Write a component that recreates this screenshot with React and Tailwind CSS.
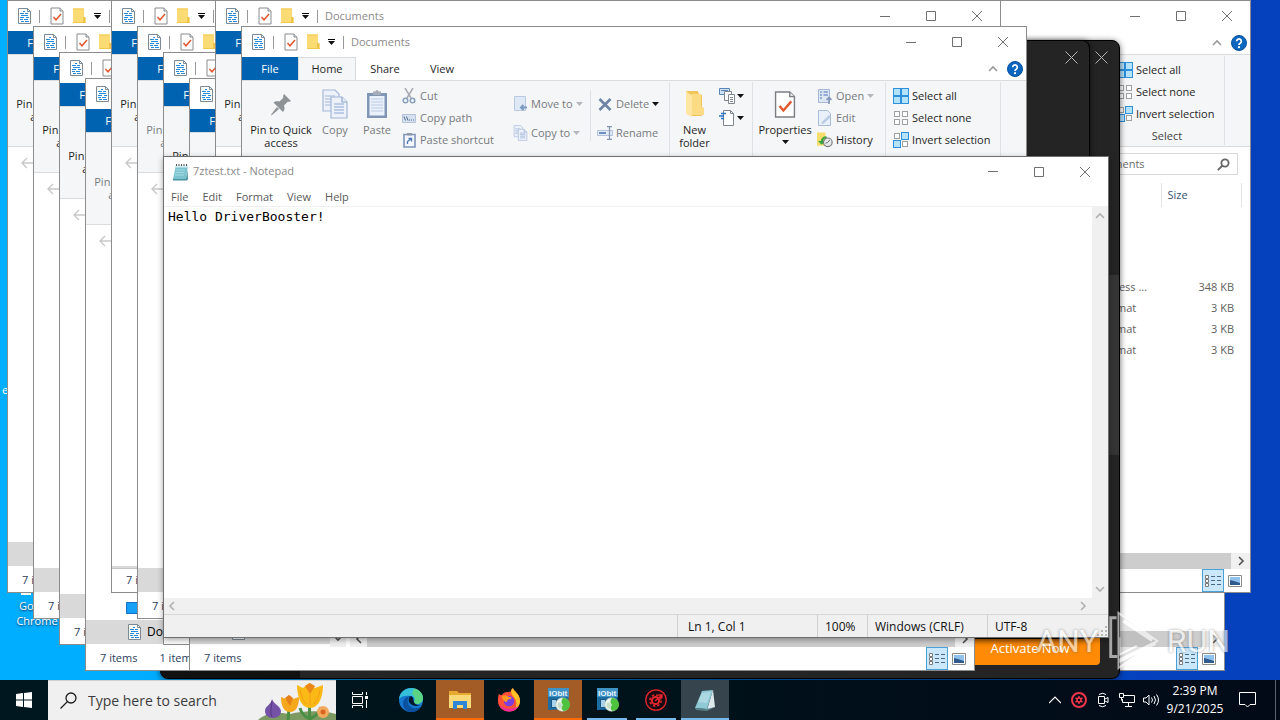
import React from 'react';

const ui = "font-['Open_Sans','Noto_Sans',sans-serif]";

/* ---------- small drawings ---------- */

function DocIcon() {
  return (
    <svg width="13" height="16" viewBox="0 0 13 16" fill="none" className="shrink-0">
      <path d="M.5.5h9l3 3v12H.5z" fill="#fff" stroke="#7d8a96" />
      <path d="M9.500.5v3h3" stroke="#7d8a96" />
      <path d="M5 3.500h2M2 5.500h4M7 5.500h3M3 7.500h7M2 9.500h4M8 9.500h3M2 11.500h3M6 11.500h4M3 13.500h3M7 13.500h4" stroke="#2589dc" />
    </svg>
  );
}

function CheckDocIcon({ size = 14 }) {
  return (
    <svg width={size} height={Math.round(size * 1.3)} viewBox="0 0 14 18" fill="none" className="shrink-0">
      <path d="M1 1h9l3 3v13H1z" fill="#fff" stroke="#7b7f84" strokeWidth=".9" />
      <path d="M10 1v3h3" fill="#e8ebee" stroke="#7b7f84" strokeWidth=".9" />
      <path d="m3.500 10 2.500 2.800L11 7" stroke="#e2582c" strokeWidth="1.500" />
    </svg>
  );
}

function SmallFolderIcon() {
  return (
    <svg width="14" height="16" viewBox="0 0 14 16" className="shrink-0">
      <path d="M1 .5h11v9l1.500 1v4.500H1z" fill="#fbdc74" />
      <path d="M1 .5h11v1H1zM1 14h12.500v1H1z" fill="#f0c850" />
      <path d="M11 9h2.500v6H11z" fill="#eec34a" />
    </svg>
  );
}

function FolderIcon() {
  return (
    <svg width="20" height="28" viewBox="0 0 20 28" className="shrink-0">
      <path d="M1 1h12l1 3 3 1v21H5z" fill="#f0c55c" />
      <path d="M6 4h10v12l3 2v7H6z" fill="#fbdb83" />
      <path d="M1 1l6 5v21l-6-3z" fill="#ffe7a3" />
    </svg>
  );
}

function Caret({ light }) {
  return (
    <svg width="7" height="4" viewBox="0 0 7 4" className="shrink-0">
      <path d="M0 0h7L3.500 4z" fill={light ? '#b4b8bd' : '#111'} />
    </svg>
  );
}

function Chevron({ dir, color = '#9a9a9a', size = 10 }) {
  const d = {
    up: 'M1 7l4-4 4 4',
    down: 'M1 3l4 4 4-4',
    left: 'M7 1L3 5l4 4',
    right: 'M3 1l4 4-4 4',
  }[dir];
  return (
    <svg width={size} height={size} viewBox="0 0 10 10" fill="none" stroke={color} strokeWidth="1.600" className="shrink-0">
      <path d={d} />
    </svg>
  );
}

function ArrowIcon({ flip }) {
  return (
    <svg width="14" height="12" viewBox="0 0 14 12" fill="none" stroke="#c9c9c9" strokeWidth="1.400">
      <path d={flip ? 'M0 6h13M8 1l5 5-5 5' : 'M14 6H1M6 1L1 6l5 5'} />
    </svg>
  );
}

function PinIcon() {
  return (
    <svg width="24" height="28" viewBox="0 0 24 28" fill="#8e9398">
      <path d="M15 4l7 7-2 1-1-.5-4 4c1 3 .5 5-1 6.500L4.500 12.500c1.500-1.500 4-1.500 6-1l4-4-.5-1.500z" />
      <path d="M8 17l2 2-7 6-1 .5L2.500 24z" />
    </svg>
  );
}

function CopyIcon({ small }) {
  return (
    <svg width={small ? 15 : 26} height={small ? 16 : 30} viewBox="0 0 26 30" fill="#edf2fa" stroke="#a5b6d8" strokeWidth="1.200">
      <path d="M1 1h12l4 4v17H1z" />
      <path d="M3 7h10M3 10h10M3 13h10M3 16h10" />
      <path d="M9 8h11l5 5v16H9z" />
      <path d="M20 8v5h5M12 15h10M12 18h10M12 21h10M12 24h10" stroke="#8ea6d2" />
    </svg>
  );
}

function PasteIcon() {
  return (
    <svg width="22" height="30" viewBox="0 0 22 30" fill="none">
      <path d="M1 4h20v25H1z" fill="#8195b5" />
      <path d="M3.500 7h15v19.500h-15z" fill="#eaf1fb" />
      <path d="M7 2.500h2.500a1.500 1.500 0 0 1 3 0H15V6H7z" fill="#a6adb8" />
      <path d="M5 10h12M5 13h12M5 16h12M5 19h12M5 22h12" stroke="#bccbe4" />
    </svg>
  );
}

function CutIcon() {
  return (
    <svg width="14" height="16" viewBox="0 0 14 16" fill="none" stroke="#8aa0bf" strokeWidth="1.500">
      <path d="M3 0l6 10M11 0L5 10" stroke="#a6abb2" />
      <circle cx="3.500" cy="12.500" r="2.300" />
      <circle cx="10.500" cy="12.500" r="2.300" />
    </svg>
  );
}

function PathIcon() {
  return (
    <svg width="14" height="9" viewBox="0 0 14 9" fill="none">
      <path d="M.5.5h13v8H.5z" fill="#d6e1f0" stroke="#b3c3dc" />
      <path d="M2 2.500l1.500 4M4.500 2.500l1.500 4" stroke="#566d8f" />
      <path d="M7 6h6" stroke="#566d8f" strokeDasharray="1 1" />
    </svg>
  );
}

function ShortcutIcon() {
  return (
    <svg width="13" height="16" viewBox="0 0 13 16" fill="none">
      <path d="M1 2.500h11v12.500H1z" fill="#f2f6fc" stroke="#7f95b9" strokeWidth="1.600" />
      <path d="M4 1h5v2.500H4z" fill="#8d99ab" />
      <path d="M4.500 12V9.500L8 7M5.500 6.500h3v3" stroke="#4e77b5" strokeWidth="1.300" />
    </svg>
  );
}

function MoveIcon() {
  return (
    <svg width="13" height="16" viewBox="0 0 13 16" fill="none">
      <path d="M.5.5h11v14H.5z" fill="#dfe8f5" stroke="#b9c9e2" />
      <path d="M13 11.500H7M9.500 9L7 11.500l2.500 2.500" stroke="#7f9ac2" strokeWidth="2" />
    </svg>
  );
}

function DeleteIcon() {
  return (
    <svg width="14" height="13" viewBox="0 0 14 13" stroke="#6d84a5" strokeWidth="2.600" fill="none">
      <path d="M1.500 1l11 11M12.500 1l-11 11" />
    </svg>
  );
}

function RenameIcon() {
  return (
    <svg width="16" height="14" viewBox="0 0 16 14" fill="none">
      <path d="M.5 4.500h15v5H.5z" fill="#e3ebf7" stroke="#b3c3dc" />
      <path d="M2 7h7" stroke="#6f8fc0" strokeWidth="2" />
      <path d="M10 .7h5M12.500.7v12.600M10 13.300h5" stroke="#8395ae" strokeWidth="1.200" />
    </svg>
  );
}

function NewItemIcon() {
  return (
    <svg width="17" height="16" viewBox="0 0 17 16" fill="#fff" stroke="#7d858e">
      <path d="M.5.5h10v6H.5z" fill="#cfe2f5" stroke="#5a85b5" />
      <path d="M2 2.500h7" stroke="#5a85b5" />
      <path d="M5.500 3.500h7v9h-7z" />
      <path d="M9.500 6.500h6v9h-6z" />
      <path d="M11 9.500h3M11 11.500h3M11 13.500h3" />
    </svg>
  );
}

function EasyAccessIcon() {
  return (
    <svg width="17" height="16" viewBox="0 0 17 16" fill="none">
      <path d="M4.500.5h7l3 3v12h-10z" fill="#fff" stroke="#7d858e" />
      <path d="M11.500.5v3h3" stroke="#7d858e" />
      <path d="M2 3.500h5M0 6h5M2 8.500h3" stroke="#2576c8" strokeWidth="1.500" />
    </svg>
  );
}

function OpenIcon() {
  return (
    <svg width="14" height="15" viewBox="0 0 14 15" fill="none">
      <path d="M.5.5h11v13H.5z" fill="#dde7f5" stroke="#a4b7d8" />
      <path d="M2 3h2M2 6h2M2 9h2M5.500 3H10M5.500 6H10" stroke="#7f9ac9" strokeWidth="1.500" />
      <path d="M11 15V9M8.500 11L11 8.500l2.500 2.500" stroke="#8497b8" strokeWidth="1.600" />
    </svg>
  );
}

function EditIcon() {
  return (
    <svg width="14" height="16" viewBox="0 0 14 16" fill="none">
      <path d="M.5.5h9l3 3v12H.5z" fill="#e9f0fa" stroke="#a9bbda" />
      <path d="M3 13l8-8 2 2-8 7z" fill="#b9cae6" />
    </svg>
  );
}

function HistoryIcon() {
  return (
    <svg width="17" height="16" viewBox="0 0 17 16" fill="none">
      <path d="M0 0h9v14H0z" fill="#f8dc6c" />
      <path d="M10 4a6 6 0 0 0-6 5H1l4 4 4-4H6.500a4 4 0 0 1 4-3z" fill="#35a53c" />
      <circle cx="11.500" cy="10.500" r="4.600" fill="#e6e9ec" stroke="#777" strokeWidth="1.200" />
      <path d="M11.500 10.500l2-2.500M11.500 10.500l-2.500 1" stroke="#666" />
    </svg>
  );
}

function TilesIcon({ mode }) {
  const cells = [
    [0, 0, mode === 'all'],
    [8, 0, mode === 'all' || mode === 'invert'],
    [0, 8, mode === 'all' || mode === 'invert'],
    [8, 8, mode === 'all'],
  ];
  return (
    <svg width="16" height="16" viewBox="0 0 16 16" className="shrink-0">
      {cells.map(([x, y, on]) =>
        on ? (
          <rect key={`${x}${y}`} x={x + 0.5} y={y + 0.5} width="7" height="7" fill="#b5e2fb" stroke="#2e8fdb" />
        ) : (
          <rect key={`${x}${y}`} x={x + 1.5} y={y + 1.5} width="5" height="5" fill="#fff" stroke="#a0a0a0" />
        )
      )}
    </svg>
  );
}

function HelpIcon() {
  return (
    <svg width="16" height="16" viewBox="0 0 16 16" fill="none">
      <circle cx="8" cy="8" r="7.500" fill="#0b66c0" stroke="#07529c" />
      <path d="M5.700 6.200a2.300 2.300 0 1 1 3.500 2C8.300 8.700 8 9 8 10" stroke="#fff" strokeWidth="1.700" />
      <circle cx="8" cy="12.200" r="1.100" fill="#fff" />
    </svg>
  );
}

function NotepadIcon() {
  return (
    <svg width="17" height="18" viewBox="0 0 17 18">
      <path d="M4 2h12l-2 14H1z" fill="#7cc3cf" />
      <path d="M4 2h12l-.4 2.500H3.500z" fill="#d8eef1" />
      <path d="M1 16h13l1.500-9 .5 9-1 1.500H1z" fill="#4b93a3" />
      <path d="M4.500 1v2M7 1v2M9.500 1v2M12 1v2M14.500 1v2" stroke="#555" />
      <path d="M4 7h9M3.500 9.500h9M3 12h9" stroke="#a6dbe3" />
    </svg>
  );
}

function DetailsViewIcon() {
  return (
    <svg width="18" height="14" viewBox="0 0 18 14" fill="none">
      <path d="M1.500 1.500h3v3h-3zM1.500 5.500h3v3h-3zM1.500 9.500h3v3h-3z" fill="#fff" stroke="#7a7a7a" />
      <path d="M7 2.500h4M13 2.500h4M7 6.500h4M13 6.500h4M7 10.500h4M13 10.500h4" stroke="#4a6a8a" />
    </svg>
  );
}

function ThumbViewIcon() {
  return (
    <svg width="14" height="12" viewBox="0 0 14 12">
      <path d="M.5.5h13v11H.5z" fill="#fff" stroke="#8a8a8a" />
      <path d="M2 2h10v8H2z" fill="#8fc3ee" />
      <path d="M2 10V5l4 1 6 2v2z" fill="#30598c" />
    </svg>
  );
}

/* ---------- shared window pieces ---------- */

function WindowControls() {
  const btn = 'flex w-[46px] items-center justify-center';
  return (
    <div className="ml-auto flex self-stretch">
      <button className={btn} aria-label="Minimize">
        <svg width="10" height="11" stroke="#6f6f6f"><path d="M0 5.500h10" /></svg>
      </button>
      <button className={btn} aria-label="Maximize">
        <svg width="10" height="10" stroke="#6f6f6f" fill="none"><path d="M.5.5h9v9H.5z" /></svg>
      </button>
      <button className={btn} aria-label="Close">
        <svg width="10" height="10" stroke="#6f6f6f"><path d="M0 0l10 10M10 0L0 10" /></svg>
      </button>
    </div>
  );
}

function BigButton({ icon, label, className = '', caret, disabled }) {
  return (
    <button className={`flex flex-col items-center pt-[6px] leading-[13px] ${disabled ? 'text-[#777b80]' : 'text-[#1f1f1f]'} ${className}`}>
      <span className="mb-[3px] flex h-[32px] items-center">{icon}</span>
      {label}
      {caret && <span className="pt-[4px]"><Caret /></span>}
    </button>
  );
}

function SmallButton({ icon, label, caret, caretLight, disabled }) {
  return (
    <button className={`flex h-[22px] items-center gap-[3px] whitespace-nowrap ${disabled ? 'text-[#777b80]' : 'text-[#1f1f1f]'}`}>
      <span className="flex w-[16px] justify-center">{icon}</span>
      {label}
      {caret && <Caret light={caretLight} />}
    </button>
  );
}

function Group({ label, className, children }) {
  return (
    <div className={`flex flex-col border-r border-[#dfe1e4] ${className}`}>
      <div className="flex h-[72px]">{children}</div>
      <div className="text-center leading-[22px] text-[#444]">{label}</div>
    </div>
  );
}

function RibbonGroups() {
  return (
    <>
      <Group label="Organize" className="w-[164px] shrink-0">
        <div className="flex w-[84px] flex-col gap-[7px] pt-[11px] pl-[6px]">
          <SmallButton icon={<MoveIcon />} label="Move to" caret caretLight disabled />
          <SmallButton icon={<CopyIcon small />} label="Copy to" caret caretLight disabled />
        </div>
        <div className="my-[8px] w-px bg-[#dfe1e4]" />
        <div className="flex flex-col gap-[7px] pt-[11px] pl-[6px]">
          <SmallButton icon={<DeleteIcon />} label="Delete" caret disabled />
          <SmallButton icon={<RenameIcon />} label="Rename" disabled />
        </div>
      </Group>
      <Group label="New" className="w-[83px] shrink-0">
        <BigButton icon={<FolderIcon />} label={<>New<br />folder</>} className="w-[49px]" />
        <div className="flex flex-col pt-[3px]">
          <button className="flex h-[22px] items-center gap-px" aria-label="New item"><NewItemIcon /><Caret /></button>
          <button className="flex h-[22px] items-center gap-px" aria-label="Easy access"><EasyAccessIcon /><Caret /></button>
        </div>
      </Group>
      <Group label="Open" className="w-[133px] shrink-0">
        <BigButton icon={<CheckDocIcon size={22} />} label="Properties" className="w-[64px]" caret />
        <div className="flex flex-col pt-[3px]">
          <SmallButton icon={<OpenIcon />} label="Open" caret caretLight disabled />
          <SmallButton icon={<EditIcon />} label="Edit" disabled />
          <SmallButton icon={<HistoryIcon />} label="History" />
        </div>
      </Group>
      <Group label="Select" className="w-[115px] shrink-0">
        <div className="flex flex-col pt-[3px] pl-[7px]">
          <SmallButton icon={<TilesIcon mode="all" />} label="Select all" />
          <SmallButton icon={<TilesIcon mode="none" />} label="Select none" />
          <SmallButton icon={<TilesIcon mode="invert" />} label="Invert selection" />
        </div>
      </Group>
    </>
  );
}

function Ribbon({ pinDisabled, stacked }) {
  return (
    <div className="flex h-[93px] shrink-0 overflow-hidden border-y border-[#dadbdc] bg-[#f5f6f7] py-px">
      <Group label={stacked ? '' : 'Clipboard'} className="w-[264px] shrink-0 border-transparent">
        <BigButton icon={<PinIcon />} label={<>Pin to Quick<br />access</>} className="w-[78px]" disabled={pinDisabled} />
        {!stacked && (
          <>
            <BigButton icon={<CopyIcon />} label="Copy" className="w-[30px]" disabled />
            <BigButton icon={<PasteIcon />} label="Paste" className="ml-[12px] w-[30px]" disabled />
            <div className="ml-[9px] flex flex-col pt-[3px]">
              <SmallButton icon={<CutIcon />} label="Cut" disabled />
              <SmallButton icon={<PathIcon />} label="Copy path" disabled />
              <SmallButton icon={<ShortcutIcon />} label="Paste shortcut" disabled />
            </div>
          </>
        )}
      </Group>
      {!stacked && <RibbonGroups />}
    </div>
  );
}

const files = [
  ['Database', 'Microsoft Access ...', '348 KB'],
  ['letter', 'Rich Text Format', '3 KB'],
  ['notes', 'Rich Text Format', '3 KB'],
  ['report', 'Rich Text Format', '3 KB'],
];

function FileTable() {
  return (
    <table className="mt-[2px] w-full table-fixed border-collapse text-[#5f5f5f]">
      <thead>
        <tr className="h-[24px] text-left text-[#3b5274]">
          <th className="pl-[16px] font-normal">Name</th>
          <th className="w-[121px] border-r border-[#e5e5e5] pl-[10px] font-normal">Type</th>
          <th className="w-[80px] border-r border-[#e5e5e5] pl-[6px] font-normal">Size</th>
          <th className="w-[9px]" aria-label="spacer" />
        </tr>
        <tr className="h-[70px]" />
      </thead>
      <tbody>
        {files.map(([name, type, size]) => (
          <tr key={name} className="h-[21px]">
            <td className="truncate pl-[16px]">{name}</td>
            <td className="pl-[10px] whitespace-nowrap">{type}</td>
            <td className="pr-[7px] text-right">{size}</td>
            <td />
          </tr>
        ))}
      </tbody>
    </table>
  );
}

// "stacked" windows lie under others in the cascade and skip the parts that are covered
function Explorer({ className, stacked, title = !stacked, list, pinDisabled, treeScrolled, selected }) {
  return (
    <section className={`absolute flex h-[593px] w-[786px] flex-col overflow-hidden border border-[#8c8c8c] bg-white ${className}`}>
      <div className="flex h-[30px] shrink-0 items-center pl-[10px]">
        <DocIcon />
        <span className="ml-[8px] h-[13px] w-px bg-[#999]" />
        <button className="ml-[10px]" aria-label="Properties"><CheckDocIcon /></button>
        <button className="ml-[8px]" aria-label="New folder"><SmallFolderIcon /></button>
        <button className="ml-[8px] flex flex-col items-center gap-px" aria-label="Customize toolbar">
          <span className="h-px w-[7px] bg-black" />
          <Caret />
        </button>
        <span className="ml-[8px] h-[13px] w-px bg-[#999]" />
        {title && <span className="ml-[7px] text-[#8a8a8a]">Documents</span>}
        <WindowControls />
      </div>
      <nav className="flex h-[23px] shrink-0 items-stretch text-[#1f1f1f]">
        <button className="w-[56px] bg-[#0063b1] pt-px text-white">File</button>
        {!stacked && (
          <>
            <button className="-mb-px w-[58px] border-x border-t border-[#dadbdc] bg-[#f5f6f7] pb-px">Home</button>
            <button className="w-[58px] pt-px">Share</button>
            <button className="w-[56px] pt-px">View</button>
          </>
        )}
        <div className="ml-auto flex items-center gap-[9px] pr-[3px]">
          <button aria-label="Minimize the ribbon"><Chevron dir="up" /></button>
          <button aria-label="Help"><HelpIcon /></button>
        </div>
      </nav>
      <Ribbon pinDisabled={pinDisabled} stacked={stacked} />
      <div className="flex h-[34px] shrink-0 items-center gap-[13px] pr-[12px] pl-[13px]">
        <button className="pb-[2px]" aria-label="Back"><ArrowIcon /></button>
        <button className="pb-[2px]" aria-label="Forward"><ArrowIcon flip /></button>
        <div className="h-[22px] flex-1 border border-[#d9d9d9]" />
        {list && (
          <label className="flex h-[22px] w-[198px] items-center border border-[#d9d9d9] px-[7px]">
            <input
              className="w-full min-w-0 text-[#6d6d6d] outline-none placeholder:text-[#6d6d6d]"
              placeholder="Search Documents"
              aria-label="Search Documents"
            />
            <svg width="13" height="13" viewBox="0 0 13 13" fill="none" stroke="#666" strokeWidth="1.800" className="shrink-0">
              <circle cx="8" cy="5" r="3.600" />
              <path d="M5.500 7.500L.8 12.200" />
            </svg>
          </label>
        )}
      </div>
      <div className="flex min-h-0 flex-1">
        <div className="flex w-[156px] shrink-0">
          <div className="flex flex-1 flex-col justify-end overflow-hidden text-[12px] text-black">
            {treeScrolled ? (
              <div className="h-[3px] border-b border-[#c4c4c4] bg-[#d9d9d9]" />
            ) : (
              <>
                {selected && (
                  <div className="flex h-[24px] items-center pl-[40px]">
                    <svg width="16" height="12"><path d="M.5.5h15v11H.5z" fill="#18a0f8" stroke="#1271bd" /></svg>
                  </div>
                )}
                <div className="mb-[3px] flex h-[24px] shrink-0 items-center gap-[6px] bg-[#d9d9d9] pl-[42px]">
                  <DocIcon />
                  {selected && 'Documents'}
                </div>
              </>
            )}
          </div>
          <div className="flex w-[16px] flex-col items-center justify-end bg-[#f0f0f0] pb-[4px]">
            <Chevron dir="down" color="#505050" />
          </div>
        </div>
        <div className="ml-[4px] flex min-w-0 flex-1 flex-col justify-end">
          {list && <div className="flex-1"><FileTable /></div>}
          <div className="flex h-[16px] shrink-0 items-center bg-[#f0f0f0]">
            <span className="flex w-[17px] justify-center"><Chevron dir="left" color="#505050" /></span>
            <span className="h-full flex-1 bg-[#cdcdcd]" />
            <span className="flex w-[19px] justify-center"><Chevron dir="right" color="#505050" /></span>
          </div>
        </div>
      </div>
      <footer className="flex h-[23px] shrink-0 items-center pr-[4px] pl-[14px] text-[#2b3d5c]">
        <span>7 items</span>
        {selected && <span className="ml-[22px]">1 item selected</span>}
        <button className="ml-auto flex h-[23px] w-[22px] items-center justify-center border border-[#4ba0d8] bg-[#cbe8fb]" aria-label="Details">
          <DetailsViewIcon />
        </button>
        <button className="flex w-[22px] justify-center" aria-label="Thumbnails"><ThumbViewIcon /></button>
      </footer>
    </section>
  );
}

function BoosterWindow({ className, children }) {
  return (
    <section className={`absolute overflow-hidden rounded-lg border border-black bg-[#242424] shadow-[0_1px_6px_rgba(0,0,0,0.6)] ${className}`}>
      <button className="absolute top-[10px] right-[11px]" aria-label="Close">
        <svg width="13" height="13" stroke="#b5b5b5"><path d="M.5.5l12 12M12.500.5l-12 12" /></svg>
      </button>
      {children}
    </section>
  );
}

function Notepad() {
  return (
    <section className="absolute top-[156px] left-[163px] flex h-[482px] w-[946px] flex-col border border-[#6f6f6f] bg-white shadow-[0_2px_6px_rgba(0,0,0,0.35)]">
      <div className="flex h-[29px] shrink-0 items-center gap-[4px] pl-[8px]">
        <NotepadIcon />
        <span className="text-[#8a8a8a]">7ztest.txt - Notepad</span>
        <WindowControls />
      </div>
      <div className="flex h-[21px] shrink-0 items-center gap-[14px] border-b border-[#f0f0f0] pt-[2px] pl-[7px] text-[#5a5a5a]">
        <button>File</button>
        <button>Edit</button>
        <button>Format</button>
        <button>View</button>
        <button>Help</button>
      </div>
      <div className="flex min-h-0 flex-1">
        <textarea
          className="min-w-0 flex-1 resize-none px-[4px] py-[2px] font-['DejaVu_Sans_Mono',monospace] text-[13px] leading-[16px] text-black outline-none"
          defaultValue="Hello DriverBooster!"
          spellCheck={false}
          aria-label="Text editor"
        />
        <div className="flex w-[16px] flex-col items-center justify-between bg-[#f0f0f0] py-[4px]">
          <Chevron dir="up" color="#b0b0b0" />
          <Chevron dir="down" color="#b0b0b0" />
        </div>
      </div>
      <div className="flex h-[16px] shrink-0 items-center justify-between bg-[#f0f0f0] pr-[20px] pl-[3px]">
        <Chevron dir="left" color="#b0b0b0" />
        <Chevron dir="right" color="#b0b0b0" />
      </div>
      <footer className="flex h-[23px] shrink-0 items-stretch border-t border-[#d7d7d7] bg-[#f0f0f0] text-[12px] leading-[24px] text-[#111]">
        <span className="flex-1 border-r border-[#d0d0d0]" />
        <span className="w-[140px] border-r border-[#d0d0d0] pl-[10px]">Ln 1, Col 1</span>
        <span className="w-[50px] border-r border-[#d0d0d0] pl-[7px]">100%</span>
        <span className="w-[120px] border-r border-[#d0d0d0] pl-[7px]">Windows (CRLF)</span>
        <span className="flex w-[120px] pl-[7px]">
          UTF-8
          <svg width="10" height="10" fill="#b8b8b8" className="mr-px mb-px ml-auto self-end">
            <path d="M8 0h2v2H8zM8 4h2v2H8zM8 8h2v2H8zM4 4h2v2H4zM4 8h2v2H4zM0 8h2v2H0z" />
          </svg>
        </span>
      </footer>
    </section>
  );
}

function Watermark() {
  return (
    <div className="pointer-events-none absolute right-[50px] bottom-[8px] flex items-center gap-[5px] font-['Roboto',sans-serif] text-[32px] leading-none text-white opacity-60 [text-shadow:0_0_3px_#555]">
      <span>ANY</span>
      <svg width="58" height="62" viewBox="0 0 58 64" fill="none" stroke="#fff" strokeWidth="3">
        <path d="M12 8H6v40h7" />
        <path d="M14 3l40 29-40 28z" fill="#999" fillOpacity=".4" strokeWidth="2" />
        <path d="M19 11l30 20M14 53l38-19" strokeWidth="4" />
        <path d="M15 28v18l18-9" strokeWidth="2" />
      </svg>
      <span>RUN</span>
    </div>
  );
}

/* ---------- taskbar ---------- */

function FlowersArt() {
  return (
    <svg width="78" height="39" viewBox="0 0 78 39" className="shrink-0">
      <path d="M0 39c8-8 22-8 32-6 12-3 32-4 46 0v6z" fill="#7d9a63" />
      <path d="M30 39c1-6 0-10 2-14M52 39c-1-8 0-14-1-20M52 38c-7-3-9-7-10-11M52 38c6-3 10-8 11-12" stroke="#4b8f45" strokeWidth="3" fill="none" />
      <path d="M14 18c2 6 8 6 9 12 0 4-3 7-8 7s-8-3-8-7c0-5 6-6 7-12z" fill="#7452a5" />
      <path d="M14 20c-1 7-2 11 0 16" stroke="#533682" fill="none" />
      <path d="M23 16l5 2 3-4 4 4 6-2c0 9-3 15-9 15s-9-6-9-15z" fill="#f6a81c" />
      <path d="M27 17l4-3 4 3-3 8z" fill="#e6801a" />
      <path d="M39 4l6 3 6-5 6 5 8-3c0 12-4 23-13 23S39 15 39 4z" fill="#fbb917" />
      <path d="M47 5l5-3 5 3-5 8z" fill="#e9871b" />
      <path d="M42 9c1 6 3 10 6 14M62 9c-1 6-3 10-6 14M52 13v11" fill="none" stroke="#f49d12" />
      <circle cx="65" cy="31" r="6" fill="#f3a95e" />
      <circle cx="65" cy="31" r="2.500" fill="#d9641f" />
    </svg>
  );
}

function EdgeIcon() {
  return (
    <svg width="26" height="26" viewBox="0 0 26 26">
      <circle cx="13" cy="13" r="12" fill="#1478cf" />
      <path d="M1 12C2 5 7 1 13 1c7 0 12 5 12 10 0 4-3 6-6 6-2 0-4-1-3-2 1-2 1-5-3-6-5-1-10 0-12 3z" fill="#36bfd8" />
      <path d="M16 1.500c6 1 9 6 9 9.500 0 4-3 6-6 6-2 0-4-1-3-2 2-4 0-7-2-8z" fill="#5bd583" />
      <path d="M13 9c-3 1-4 4-3 7 1 4 5 6 9 5 2 0 3-1 4-2-2 4-6 6-10 6-5 0-8-4-8-9 1-5 4-7 8-7z" fill="#0c50a0" />
      <path d="M16 15c-1-1 0-5-3-6-2 1-3 4-2 6 2 4 8 5 12 3-2 1-6 0-7-3z" fill="#06182e" />
    </svg>
  );
}

function FolderTaskIcon() {
  return (
    <svg width="22" height="20" viewBox="0 0 22 20">
      <path d="M0 1h8l2 2h12v15H0z" fill="#e7a92f" />
      <path d="M0 5h22v13H0z" fill="#fcd978" />
      <path d="M4 11h14v8h-4v-4H8v4H4z" fill="#2f86d6" />
    </svg>
  );
}

function FirefoxIcon() {
  return (
    <svg width="24" height="24" viewBox="0 0 24 24">
      <path d="M2 6c1 1 2 1 3 1 1-2 3-3 5-3 2 0 3 0 4-1 0-1 1-2 2-3 0 3 7 5 7 13 0 6-5 10.500-11 10.500S1 19 1 13c0-3 0-5 1-7z" fill="#ff4f3a" />
      <path d="M14 3c0-1 1-2 2-3 0 3 7 5 7 13 0 4-3 8-7 10 3-3 4-6 3-10-1-4-5-5-5-10z" fill="#ffbf26" />
      <path d="M3 17c2 5 6 6.500 9 6.500 4 0 8-2 10-6-5 4-13 5-19-.5z" fill="#f2299a" />
      <circle cx="12" cy="13" r="5.200" fill="#7a3fe0" />
      <path d="M5 8c3-2 5 0 7 1 2 0 3 1 2 2-3 0-4 1-4 3-3 0-5-3-5-6z" fill="#ff9a1f" />
    </svg>
  );
}

function IObitIcon() {
  return (
    <svg width="24" height="24" viewBox="0 0 24 24" fill="none">
      <path d="M2 0h21l-1 21L2 22z" fill="#1d6da5" />
      <path d="M2 0h21v9H2z" fill="#3f93c4" />
      <text x="3" y="8" fontSize="8" fontWeight="700" fill="#e8f4fb" fontFamily="Liberation Sans, sans-serif">IObit</text>
      <path d="M5 11h6v9H5z" fill="#1a5684" />
      <path d="M6 12h4v7H6z" fill="#a8d3ea" />
      <circle cx="16.500" cy="16.500" r="6.800" fill="#eef6ee" stroke="#b5c4b5" strokeWidth=".6" />
      <path d="M17 10a6.500 6.500 0 0 1 1 13c-3-1-3-4-1-6-2-2-2-5 0-7z" fill="#4fc23f" />
      <path d="M12 15c2-1 4 0 4 2s-1 3-2 4c-2-1-3-4-2-6z" fill="#c4dcc8" />
    </svg>
  );
}

function BoosterIcon() {
  return (
    <svg width="22" height="22" viewBox="0 0 22 22" fill="none" stroke="#e5262f">
      <circle cx="11" cy="11" r="10.200" fill="#190c10" strokeWidth="1.300" />
      <circle cx="10.500" cy="11.500" r="3.600" strokeWidth="2" />
      <circle cx="10.500" cy="11.500" r="5.600" strokeWidth="1.600" strokeDasharray="2.400 2" />
      <path d="M10 12l6.500-5.500M13.500 6h3.300v3.300" strokeWidth="1.600" />
    </svg>
  );
}

function NotepadTaskIcon() {
  return (
    <svg width="24" height="24" viewBox="0 0 24 24">
      <path d="M9 3l11-1-6 19-12-1z" fill="#8fc9d6" />
      <path d="M20 2l2 17-8 3z" fill="#dce9ec" />
      <path d="M2 20l12 1 8-2-8 4-11-1z" fill="#57828c" />
      <path d="M9 5l9-1-4 11-9-1z" fill="#bfe3ea" fillOpacity=".6" />
    </svg>
  );
}

function TaskButton({ label, tone, children }) {
  const bg = { orange: 'bg-[#a35c26]', active: 'bg-[#36454d]' }[tone] || '';
  const line = {
    orange: 'w-[48px] bg-[#ff6a00]',
    open: 'w-[40px] bg-[#76b9ed]',
    active: 'w-[48px] bg-[#76b9ed]',
  }[tone] || 'w-[48px]';
  return (
    <button className={`flex h-full w-[48px] flex-col items-center ${bg}`} aria-label={label}>
      <span className="flex flex-1 items-center pt-[2px]">{children}</span>
      <span className={`h-[2px] ${line}`} />
    </button>
  );
}

function Tray() {
  const cell = 'flex w-[24px] items-center justify-center';
  return (
    <div className="ml-auto flex h-full items-stretch text-white">
      <button className={cell} aria-label="Show hidden icons">
        <svg width="12" height="8" fill="none" stroke="#fff" strokeWidth="1.200"><path d="M0 7l6-6 6 6" /></svg>
      </button>
      <button className={cell} aria-label="Driver Booster">
        <svg width="16" height="16" viewBox="0 0 16 16" fill="none" stroke="#f2364a">
          <circle cx="8" cy="8" r="7" strokeWidth="2" />
          <circle cx="8" cy="8" r="2" strokeWidth="1.500" />
          <path d="M8 4v2M8 10v2M4.500 6l2 1M9.500 9l2 1M11.500 6l-2 1M6.500 9l-2 1" strokeWidth="1.500" />
        </svg>
      </button>
      <button className={cell} aria-label="Camera">
        <svg width="12" height="16" viewBox="0 0 12 16" fill="none" stroke="#fff">
          <path d="M1.500 4.500h6v7h-6zM8 7l3-1.500v5L8 9M2 2.500Q5.500 0 9 2.500M2 13.500q3.500 2.500 7 0" />
        </svg>
      </button>
      <button className={cell} aria-label="Network">
        <svg width="16" height="14" viewBox="0 0 16 14" fill="none" stroke="#fff">
          <path d="M5 2.500h10.500v7H3.500V6M.5.5h4v4h-4zM2.500 4.500v3M9.500 10v3M6 13.500h7" />
        </svg>
      </button>
      <button className={cell} aria-label="Volume">
        <svg width="17" height="14" viewBox="0 0 17 14" fill="none" stroke="#fff">
          <path d="M.5 5h2.500l3-3v10l-3-3H.5zM8.500 4.500q2 2.500 0 5M11 3q3 4 0 8M13.500 1.500q4 5.500 0 11" />
        </svg>
      </button>
      <button className="flex w-[64px] flex-col items-center justify-center text-[12px] leading-[18px]">
        <span>2:39 PM</span>
        <span>9/21/2025</span>
      </button>
      <button className="flex w-[40px] items-center justify-center" aria-label="Notifications">
        <svg width="17" height="16" viewBox="0 0 17 16" fill="none" stroke="#fff"><path d="M.5.5h16v12H11l-2.500 2.500L6 12.500H.5z" /></svg>
      </button>
      <button className="ml-[8px] w-[5px] border-l border-[#59636b]" aria-label="Show desktop" />
    </div>
  );
}

function Taskbar() {
  return (
    <footer className="flex h-10 w-full shrink-0 items-center bg-linear-to-r from-[#00171f] via-[#00121a] to-[#020a18]">
      <button className="flex h-full w-[48px] items-center justify-center" aria-label="Start">
        <svg width="16" height="16" viewBox="0 0 16 16" fill="#fff"><path d="M0 2l7-1v6.500H0zM8 1l8-1v7.500H8zM0 8.500h7V15l-7-1zM8 8.500h8V16l-8-1z" /></svg>
      </button>
      <label className="flex h-full w-[288px] items-center overflow-hidden border-t border-[#d0d0d0] bg-[#f0f0f0] pl-[12px]">
        <svg width="17" height="17" viewBox="0 0 17 17" fill="none" stroke="#1f1f1f" strokeWidth="1.300" className="shrink-0">
          <circle cx="11" cy="6" r="5" />
          <path d="M7.500 9.500L.5 16.500" />
        </svg>
        <input
          className="ml-[11px] min-w-0 flex-1 text-[14px] outline-none placeholder:text-[#3c3c3c]"
          placeholder="Type here to search"
          aria-label="Search"
        />
        <FlowersArt />
      </label>
      <button className="mr-[3px] flex h-full w-[48px] items-center justify-center" aria-label="Task view">
        <svg width="17" height="16" viewBox="0 0 17 16" fill="none" stroke="#fff">
          <path d="M.5 0v2.500h10V0M.5 16v-2.500h10V16M.5 4.500h10v7H.5zM14.500 0v3M14.500 8v8" />
          <path d="M13 4h3v3h-3z" fill="#fff" stroke="none" />
        </svg>
      </button>
      <div className="flex h-full gap-px">
        <TaskButton label="Edge"><EdgeIcon /></TaskButton>
        <TaskButton label="File Explorer" tone="orange"><FolderTaskIcon /></TaskButton>
        <TaskButton label="Firefox"><FirefoxIcon /></TaskButton>
        <TaskButton label="IObit setup" tone="orange"><IObitIcon /></TaskButton>
        <TaskButton label="IObit installer" tone="open"><IObitIcon /></TaskButton>
        <TaskButton label="Driver Booster" tone="open"><BoosterIcon /></TaskButton>
        <TaskButton label="Notepad" tone="active"><NotepadTaskIcon /></TaskButton>
      </div>
      <Tray />
    </footer>
  );
}

function App() {
  return (
    <div className={`flex h-screen w-full flex-col overflow-hidden text-[11px] ${ui}`}>
      <main className="relative min-h-0 flex-1 overflow-hidden bg-linear-to-r from-[#00aeff] from-10% via-[#0078e0] to-[#0540bd] to-90%">
        {/* desktop shortcuts */}
        <div className="absolute top-[382px] left-[2px] text-white">e</div>
        <div className="absolute top-[568px] left-[5px] flex w-[64px] flex-col items-center text-center leading-[15px] text-white [text-shadow:0_1px_2px_#024]">
          <svg width="32" height="30" viewBox="0 0 32 30">
            <circle cx="16" cy="13" r="13" fill="#2fa04c" />
            <circle cx="16" cy="13" r="6" fill="#2f7fe8" stroke="#fff" strokeWidth="2" />
            <path d="M0 18h10v9H0z" fill="#fff" />
          </svg>
          Google Chrome
        </div>

        <Explorer className="top-[78px] left-[439px]" stacked />
        <Explorer className="top-0 left-[465px]" list title={false} />

        <BoosterWindow className="top-[40px] left-[160px] h-[639px] w-[960px]">
          <div className="flex h-full">
            <div className="w-[139px] bg-[#111]" />
            <div className="flex flex-1 items-end justify-end pr-[19px] pb-[13px]">
              <button className="h-[42px] w-[140px] rounded-sm bg-[#ff8a05] pt-[10px] text-[13px] text-white">Activate Now</button>
            </div>
          </div>
          <div className="absolute top-[234px] right-0 h-[180px] w-[11px] bg-[#343434]" />
        </BoosterWindow>
        <BoosterWindow className="top-[40px] left-[190px] h-[599px] w-[900px]" />

        <Explorer className="top-0 left-[7px]" stacked />
        <Explorer className="top-[26px] left-[33px]" stacked />
        <Explorer className="top-[52px] left-[59px]" stacked />
        <Explorer className="top-[78px] left-[85px]" stacked pinDisabled selected />
        <Explorer className="top-0 left-[111px]" stacked treeScrolled />
        <Explorer className="top-[26px] left-[137px]" stacked pinDisabled />
        <Explorer className="top-[52px] left-[163px]" stacked />
        <Explorer className="top-[78px] left-[189px]" stacked />
        <Explorer className="top-0 left-[215px]" stacked title />
        <Explorer className="top-[26px] left-[241px]" />

        <Notepad />
        <Watermark />
      </main>
      <Taskbar />
    </div>
  );
}

export default App;
